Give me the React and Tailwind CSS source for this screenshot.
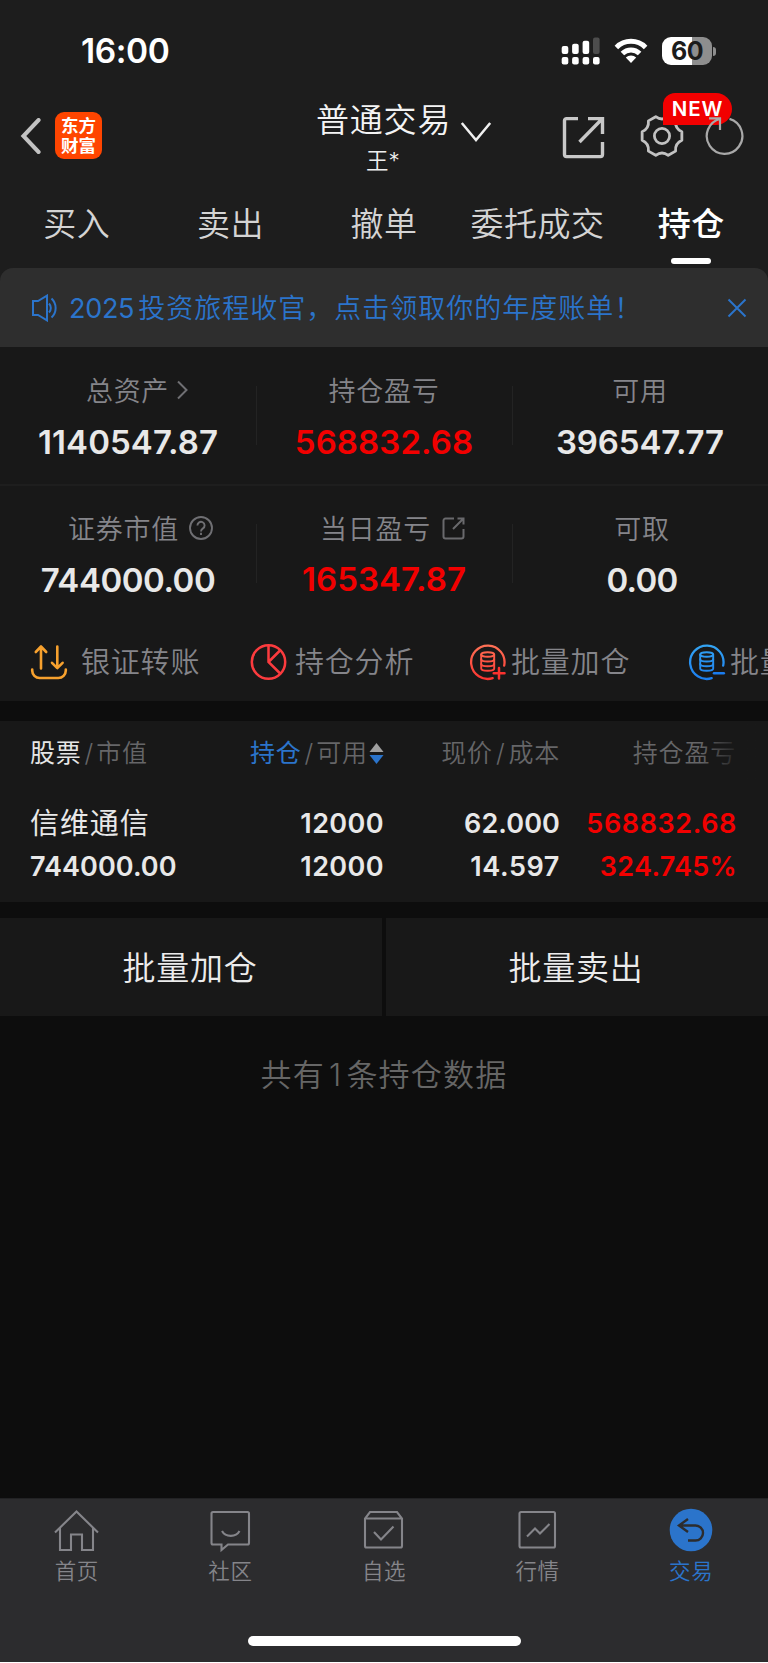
const fontClass = "font-['Inter','Noto_Sans_CJK_SC',sans-serif]";

const tabs = ['买入', '卖出', '撤单', '委托成交', '持仓'];

const summaryRows = [
  [
    { label: '总资产', value: '1140547.87', icon: 'chevron', pad: 'pl-[18px]', valueClass: 'tracking-[0.1px] text-[#e8e8e8]' },
    { label: '持仓盈亏', value: '568832.68', valueClass: 'tracking-[0.1px] text-[#f20000]' },
    { label: '可用', value: '396547.77', valueClass: 'tracking-[-0.15px] text-[#e8e8e8]' },
  ],
  [
    { label: '证券市值', value: '744000.00', icon: 'help', pad: 'pl-[25px]', valueClass: 'tracking-[-0.45px] text-[#e8e8e8]' },
    { label: '当日盈亏', value: '165347.87', icon: 'open', pad: 'pl-[17px]', valueClass: '-mt-px tracking-[0.05px] text-[#f20000]' },
    { label: '可取', value: '0.00', pad: 'pl-1', valueClass: 'pl-1 tracking-[-0.7px] text-[#e8e8e8]' },
  ],
];

const StatusBar = () => (
  <div className="flex h-[96px] items-center justify-between pl-[81px] pr-[52px] pt-[6px]">
    <span className="pt-[2px] text-[33.5px] font-semibold leading-none tracking-[-0.4px] text-white">16:00</span>
    <div className="flex items-center">
      <svg width="40" height="28" viewBox="0 0 40 28" fill="#fff">
        <rect x="0.7" y="9" width="6.6" height="8" rx="2" />
        <rect x="11.1" y="6.8" width="6.6" height="10.2" rx="2" />
        <rect x="21.6" y="3.8" width="6.6" height="13.2" rx="2" />
        <rect x="32" y="0.5" width="6.6" height="16.5" rx="2" fill="#4d4d4d" />
        <rect x="0.7" y="20" width="6.6" height="7.6" rx="2" />
        <rect x="11.1" y="20" width="6.6" height="7.6" rx="2" />
        <rect x="21.6" y="20" width="6.6" height="7.6" rx="2" />
        <rect x="32" y="20" width="6.6" height="7.6" rx="2" />
      </svg>
      <svg className="ml-[13px]" width="34" height="26" viewBox="0 0 34 26" fill="none" stroke="#fff" strokeWidth="5">
        <path d="M2.4 9.4a20.6 20.6 0 0 1 29.2 0" />
        <path d="M8.4 15.5a12.2 12.2 0 0 1 17.2 0" />
        <path d="M17 25l-5.2-5.4a7.4 7.4 0 0 1 10.4 0z" fill="#fff" stroke="none" />
      </svg>
      <div className="ml-[14px] flex h-[28px] w-[50px] items-center justify-center rounded-[9px] bg-[linear-gradient(90deg,#fff_60%,#8e8e8e_60%)]">
        <span className="text-[25px] font-bold leading-none tracking-[-0.5px] text-[#1c1c1c]">60</span>
      </div>
      <span className="ml-[1px] h-[9px] w-[3px] rounded-r-full bg-[#8e8e8e]" />
    </div>
  </div>
);

// point on a circle around the centre of the 44px gear box
const polar = (r, deg) => {
  const a = (deg * Math.PI) / 180;
  return `${(22 + r * Math.cos(a)).toFixed(2)} ${(22 + r * Math.sin(a)).toFixed(2)}`;
};

const gearPath = [0, 60, 120, 180, 240, 300]
  .map((deg, i) => `${i ? 'L' : 'M'}${polar(20.3, deg - 12)}L${polar(20.3, deg + 12)}Q${polar(14.8, deg + 30)} ${polar(20.3, deg + 48)}`)
  .join('') + 'Z';

const Header = () => (
  <div className="grid h-[90px] grid-cols-3 pt-[3px]">
    <div className="flex h-[74px] items-center pl-[20px]">
      <svg width="22" height="36" viewBox="0 0 22 36" fill="none" stroke="#c2c2c2" strokeWidth="4">
        <path d="M18.6 2 3.4 18l15.2 16" strokeLinecap="round" />
      </svg>
      <div className="-mt-px ml-[13px] flex h-[47px] w-[47px] flex-col items-center justify-center rounded-[9px] bg-[#ff4500] text-[17.5px] font-bold leading-[19.5px] text-white">
        <span>东方</span>
        <span>财富</span>
      </div>
    </div>
    <div className="flex flex-col">
      <div className="flex h-[48px] items-start pl-[60px]">
        <span className="whitespace-nowrap text-[33px] font-[350] leading-[42px] tracking-[0.8px] text-[#f4f4f4]">普通交易</span>
        <svg className="ml-[9px] mt-[22px] shrink-0" width="32" height="22" viewBox="0 0 32 22" fill="none" stroke="#f0f0f0" strokeWidth="2.5">
          <path d="M1.8 2 16 19 30.2 2" />
        </svg>
      </div>
      <span className="pl-[110px] text-[22.5px] font-[350] leading-[28px] text-[#f0f0f0]">王*</span>
    </div>
    <div className="relative flex h-[74px] items-center pl-[48px]">
      <svg className="mt-px" width="46" height="46" viewBox="0 0 46 46" fill="none" stroke="#c8c8c8" strokeWidth="3.4">
        <path d="M18 4.6H6.5a2 2 0 0 0-2 2v34a2 2 0 0 0 2 2h34a2 2 0 0 0 2-2V28" />
        <path d="M28 4.6h14.5V20M42 5 19.5 28" />
      </svg>
      <svg className="ml-[34px]" width="44" height="44" viewBox="0 0 44 44" fill="none" stroke="#c2c2c2" strokeWidth="2.8" strokeLinejoin="round">
        <path d={gearPath} />
        <circle cx="22" cy="22" r="7.6" />
      </svg>
      <div className="absolute left-[151px] top-[-6px] flex h-[32px] w-[69px] items-center justify-center rounded-[16px] rounded-bl-none rounded-tl-[12px] bg-[#f20000] text-[20.5px] font-semibold tracking-[0.8px] text-white">
        NEW
      </div>
      <svg className="relative ml-[20px]" width="42" height="42" viewBox="0 0 42 42" fill="none" stroke="#a9a9a9" strokeWidth="2.2">
        <path d="M25.5 3.9A17.8 17.8 0 1 1 16.4 3.7" />
        <path d="M5 3.4h11V15" />
      </svg>
    </div>
  </div>
);

const Tabs = () => (
  <div className="grid h-[82px] grid-cols-5">
    {tabs.map((tab) => (
      <div key={tab} className="flex flex-col items-center whitespace-nowrap pt-[17px]">
        {tab === '持仓' ? (
          <>
            <span className="text-[33px] font-medium leading-[42px] tracking-[0.5px] text-white">{tab}</span>
            <span className="mt-[13px] h-[6px] w-[40px] rounded-full bg-white" />
          </>
        ) : (
          <span className="text-[33px] font-[350] leading-[42px] tracking-[0.5px] text-[#d4d4d4]">{tab}</span>
        )}
      </div>
    ))}
  </div>
);

const Banner = () => (
  <div className="flex h-[79px] items-center rounded-t-[13px] bg-[#2e2e2e] pl-[31px] pr-[21px] text-[#2b74cb]">
    <svg width="28" height="28" viewBox="0 0 28 28" fill="none" stroke="currentColor" strokeWidth="2">
      <path d="M2 7h5l9-5.4v24.8L7 21H2z" />
      <path d="M18 9.5a6.500 6.500 0 0 1 0 9M20.500 4.500a13 13 0 0 1 0 19" />
    </svg>
    <span className="ml-[10px] grow whitespace-nowrap pt-[2px] text-[27px] font-[350] leading-none">
      <span className="mr-[4px] font-normal tracking-[-0.3px]">2025</span>
      <span className="tracking-[1px]">投资旅程收官，点击领取你的年度账单！</span>
    </span>
    <svg width="20" height="20" viewBox="0 0 20 20" fill="none" stroke="currentColor" strokeWidth="2">
      <path d="M1.5 1.5l17 17M18.5 1.5l-17 17" />
    </svg>
  </div>
);

const LabelIcon = ({ name }) => {
  if (name === 'chevron') {
    return (
      <svg className="ml-[7px]" width="12" height="20" viewBox="0 0 12 20" fill="none" stroke="#6f6f73" strokeWidth="2">
        <path d="M2 1.5l8.5 8.5L2 18.5" />
      </svg>
    );
  }
  if (name === 'help') {
    return (
      <svg className="ml-[10px]" width="24" height="24" viewBox="0 0 24 24" fill="none" stroke="#6f6f73" strokeWidth="1.9">
        <circle cx="12" cy="12" r="11" />
        <path d="M8.400 9.400a3.600 3.600 0 1 1 5.600 3c-1.400.9-2 1.500-2 3" />
        <path d="M12 16.800v2.200" />
      </svg>
    );
  }
  return (
    <svg className="ml-[11px]" width="23" height="23" viewBox="0 0 23 23" fill="none" stroke="#69696c" strokeWidth="2">
      <path d="M12 1.500H3.500a2 2 0 0 0-2 2v16a2 2 0 0 0 2 2h16a2 2 0 0 0 2-2V12" />
      <path d="M15.500 1.500h6v6M21.500 1.500 11 12" />
    </svg>
  );
};

const Summary = () => (
  <div>
    {summaryRows.map((row, i) => (
      <div key={row[0].label} className={i === 0 ? 'flex h-[139px] border-b-2 border-[#1e1e1e] pt-px' : 'flex h-[136px]'}>
        {row.map((cell, j) => (
          <div key={cell.label} className="relative flex w-1/3 flex-col items-center pt-[22px]">
            <div className={`flex h-[40px] items-center ${cell.pad || ''}`}>
              <span className="pt-[3px] text-[27px] font-[350] leading-[40px] tracking-[0.7px] text-[#85858a]">{cell.label}</span>
              {cell.icon && <LabelIcon name={cell.icon} />}
            </div>
            <div className="mt-[12px] text-[33px] font-semibold leading-[40px]">
              <p className={cell.valueClass}>{cell.value}</p>
            </div>
            {j < 2 && <span className="absolute right-[-1px] top-[38px] h-[59px] w-px bg-[#232323]" />}
          </div>
        ))}
      </div>
    ))}
  </div>
);

// coin stack inside an open ring, shared by the batch actions
const StackIcon = ({ from, to, id, children }) => (
  <svg width="38" height="38" viewBox="0 0 38 38" fill="none" stroke={`url(#${id})`} strokeWidth="2.3" strokeLinecap="round">
    <defs>
      <linearGradient id={id} gradientUnits="userSpaceOnUse" x1="0" y1="0" x2="0" y2="38">
        <stop offset="0" stopColor={from} />
        <stop offset="1" stopColor={to} />
      </linearGradient>
    </defs>
    <path d="M35.2 22.5A16.7 16.7 0 1 0 23.7 35.2" />
    <g strokeWidth="1.9">
      <ellipse cx="18.7" cy="11.500" rx="6.500" ry="2.300" />
      <path d="M12.200 11.500v14c0 1.400 2.900 2.300 6.500 2.300s6.500-.9 6.500-2.300v-14" />
      <path d="M12.200 16.200c0 1.400 2.900 2.300 6.500 2.300s6.500-.9 6.500-2.300M12.200 20.900c0 1.400 2.900 2.300 6.500 2.300s6.500-.9 6.500-2.300" />
    </g>
    <g stroke={to} strokeWidth="2.500">{children}</g>
  </svg>
);

const actionText = 'whitespace-nowrap pt-[2px] text-[29px] font-[350] leading-none tracking-[0.8px] text-[#85858a]';

const Actions = () => (
  <div className="flex h-[79px] items-center overflow-hidden pl-[30px]">
    <div className="flex w-[220px] shrink-0 items-center">
      <svg width="38" height="38" viewBox="0 0 38 38" fill="none" stroke="#f7a12e" strokeWidth="2.6" strokeLinecap="round" strokeLinejoin="round">
        <path d="M2.200 26.500v1a7.500 7.500 0 0 0 7.500 7.500h18.600a7.500 7.500 0 0 0 7.500-7.500v-1" />
        <path d="M11 25.500V3.500M5.800 9 11 3.500 16.200 9M27.300 3.500V25M22 19.800l5.300 5.400 5.300-5.400" />
      </svg>
      <span className={`ml-[13px] ${actionText}`}>银证转账</span>
    </div>
    <div className="flex w-[219px] shrink-0 items-center">
      <svg width="38" height="38" viewBox="0 0 38 38" fill="none" stroke="#fb3b3e" strokeWidth="2.5">
        <circle cx="18.500" cy="19" r="16.700" />
        <path d="M18.500 2.300V19L30.700 31M18.500 19 30 7.500" />
      </svg>
      <span className={`ml-[7px] ${actionText}`}>持仓分析</span>
    </div>
    <div className="flex w-[219px] shrink-0 items-center">
      <StackIcon id="add" from="#ff7558" to="#fb322f">
        <path d="M30 25v10.500M24.700 30.300h10.800" />
      </StackIcon>
      <span className={`ml-[4px] ${actionText}`}>批量加仓</span>
    </div>
    <div className="flex w-[219px] shrink-0 items-center">
      <StackIcon id="sell" from="#35a6f2" to="#1b7df0">
        <path d="M26 30.300h9.800" />
      </StackIcon>
      <span className={`ml-[4px] ${actionText}`}>批量卖出</span>
    </div>
  </div>
);

const Holdings = () => (
  <div className="mt-[20px] h-[181px] bg-[#181818]">
    <div className="relative flex h-[64px] items-center whitespace-nowrap text-[25px] font-[350] leading-none tracking-[0.8px] text-[#666668]">
      <div className="flex w-[220px] items-center pl-[30px]">
        <span className="font-normal text-[#e6e6e6]">股票</span>
        <span className="ml-[3px] mr-[2px]">/</span>
        <span>市值</span>
      </div>
      <div className="flex w-[166px] items-center pl-[30px]">
        <span className="font-normal text-[#2b74cb]">持仓</span>
        <span className="ml-[3px] mr-[2px]">/</span>
        <span>可用</span>
        <svg className="ml-[1px] shrink-0" width="15" height="21" viewBox="0 0 15 21">
          <path d="M7.500 0l7 9h-14z" fill="#a0a0a0" />
          <path d="M7.500 21l7-9h-14z" fill="#2b74cb" />
        </svg>
      </div>
      <div className="flex w-[174px] items-center justify-end">
        <span>现价</span>
        <span className="mx-[3px]">/</span>
        <span>成本</span>
      </div>
      <span className="w-[176px] text-right">持仓盈亏</span>
      <div className="absolute right-0 top-0 h-full w-[68px] bg-gradient-to-r from-transparent to-[#181818] to-65%" />
    </div>
    <div className="flex pt-[17px] text-[27px] font-semibold leading-[43px] text-[#e8e8e8]">
      <div className="flex w-[220px] flex-col pl-[30px]">
        <span className="text-[29px] font-normal tracking-[0.9px]">信维通信</span>
        <span className="tracking-[0.05px]">744000.00</span>
      </div>
      <div className="flex w-[164px] flex-col text-right tracking-[0.4px]">
        <span>12000</span>
        <span>12000</span>
      </div>
      <div className="flex w-[176px] flex-col text-right">
        <span className="tracking-[0.1px]">62.000</span>
        <span className="tracking-[0.6px]">14.597</span>
      </div>
      <div className="flex w-[177px] flex-col text-right tracking-[0.6px] text-[#f20000]">
        <span>568832.68</span>
        <span className="tracking-[0.3px]">324.745%</span>
      </div>
    </div>
  </div>
);

const navIcons = {
  首页: (
    <path d="M1 22.5 22.5 1.5 44 22.5M6 18v22h11V24.5h11V40h11V18" />
  ),
  社区: (
    <>
      <path d="M5 2h34.500a1.500 1.500 0 0 1 1.500 1.500V33a1.500 1.500 0 0 1-1.500 1.500H20L13.500 40v-5.500H5A1.500 1.500 0 0 1 3.500 33V3.500A1.500 1.500 0 0 1 5 2z" />
      <path d="M14 21c3.500 6.500 14 6.500 17.500 0" />
    </>
  ),
  自选: (
    <>
      <path d="M9 2h27l5 6.500V36a1.500 1.500 0 0 1-1.500 1.500H5.500A1.500 1.500 0 0 1 4 36V8.500zM4 8.500h37" />
      <path d="M13 22l7 7.500L32.500 16.500" />
    </>
  ),
  行情: (
    <>
      <rect x="4.500" y="2" width="35.500" height="35.500" rx="1.500" />
      <path d="M12 26.500l8-8 5 5 9.500-9.500" />
    </>
  ),
};

const BottomNav = () => (
  <nav className="flex h-[165px] flex-col border-b border-t border-b-white border-t-[#222224] bg-[#2c2c2e]">
    <div className="grid grid-cols-5 pt-[9px]">
      {Object.entries(navIcons).map(([name, icon]) => (
        <div key={name} className="flex flex-col items-center text-[#85858a]">
          <svg className="mt-[2px]" width="45" height="44" viewBox="0 0 45 44" fill="none" stroke="currentColor" strokeWidth="2.1">
            {icon}
          </svg>
          <span className="mt-[1px] text-[21.5px] font-[350] leading-[32px] tracking-[0.6px]">{name}</span>
        </div>
      ))}
      <div className="flex flex-col items-center text-[#2b74cb]">
        <svg width="44" height="46" viewBox="0 0 44 46" fill="none" stroke="#2c2c2e" strokeWidth="2.4">
          <circle cx="22" cy="22" r="21.3" fill="#2b74cb" stroke="none" />
          <path d="M19 11 10 17.5 19 24M10 17.5h16.5a7.5 7.5 0 0 1 0 15H19" />
        </svg>
        <span className="mt-[1px] text-[21.5px] font-[350] leading-[32px] tracking-[0.6px]">交易</span>
      </div>
    </div>
    <span className="mx-auto mb-[16px] mt-auto h-[10px] w-[273px] rounded-full bg-white" />
  </nav>
);

const App = () => (
  <main lang="zh-CN" className={`flex h-[1663px] w-[768px] flex-col overflow-hidden bg-[#0d0d0d] ${fontClass}`}>
    <header className="bg-[#1d1d1d]">
      <StatusBar />
      <Header />
      <Tabs />
      <Banner />
    </header>
    <section className="bg-[#181818]">
      <Summary />
      <Actions />
    </section>
    <Holdings />
    <div className="mt-[16px] grid h-[98px] grid-cols-2 gap-[4px] text-[33px] font-[350] tracking-[0.8px] text-[#ececec]">
      <div className="flex items-center justify-center bg-[#181818] pr-[2px] pt-[3px]">批量加仓</div>
      <div className="flex items-center justify-center bg-[#181818] pr-[2px] pt-[3px]">批量卖出</div>
    </div>
    <p className="mt-[36px] text-center text-[31px] font-[350] leading-[46px] tracking-[1.2px] text-[#666]">
      共有<span className="mx-[4px]">1</span>条持仓数据
    </p>
    <div className="grow" />
    <BottomNav />
  </main>
);

export default App;
